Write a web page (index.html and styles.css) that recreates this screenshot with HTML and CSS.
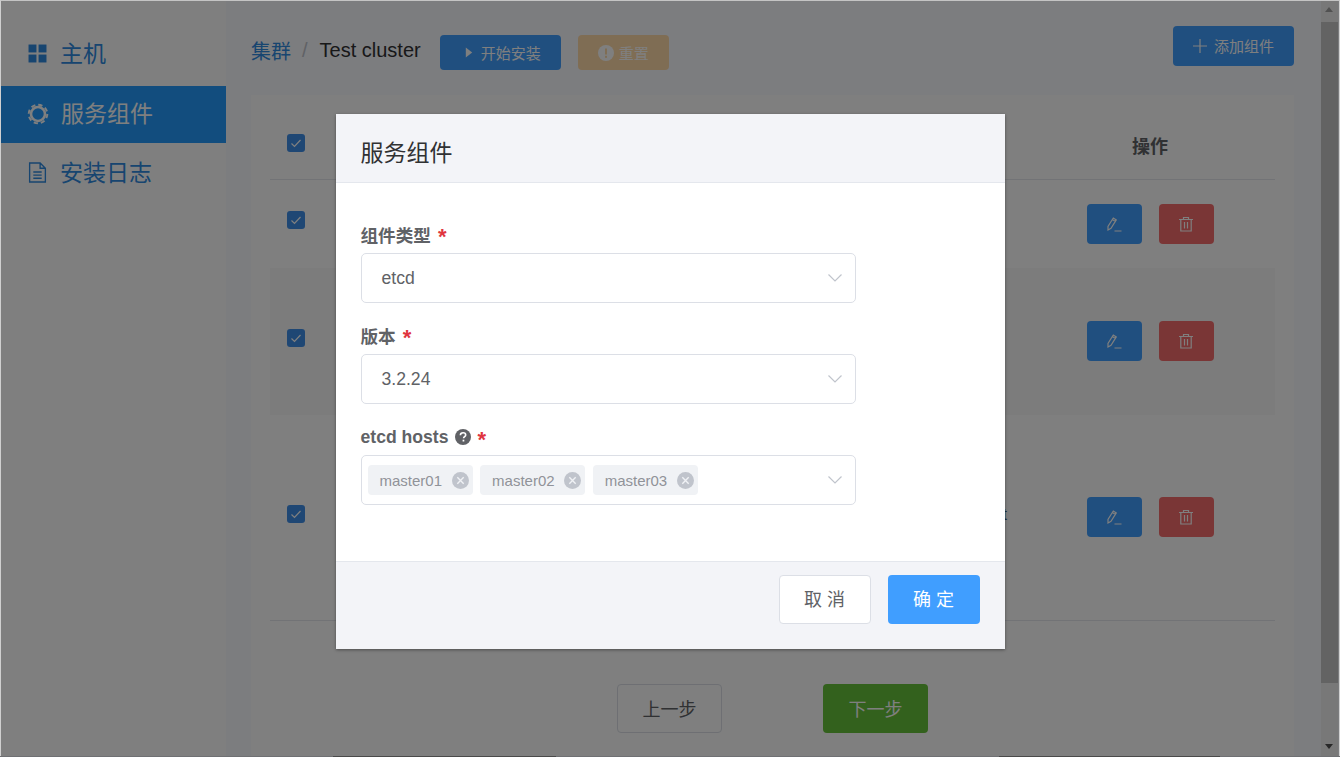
FILE: index.html
```html
<!DOCTYPE html>
<html lang="zh">
<head>
  <meta charset="UTF-8">
  <title>服务组件</title>
  <link rel="stylesheet" href="styles.css">
</head>
<body>
  <div class="window">
    <div class="app">
      <aside class="sidebar">
        <a class="menu-item">
          <svg class="menu-icon" viewBox="0 0 18 18"><rect x="0.5" y="0.5" width="7.5" height="7.5"/><rect x="10" y="0.5" width="7.5" height="7.5"/><rect x="0.5" y="10" width="7.5" height="7.5"/><rect x="10" y="10" width="7.5" height="7.5"/></svg>
          <span>主机</span>
        </a>
        <a class="menu-item active">
          <svg class="menu-icon gear" viewBox="0 0 22 22"><circle cx="11" cy="11" r="7" fill="none" stroke="currentColor" stroke-width="2.6"/><circle cx="11" cy="11" r="9.3" fill="none" stroke="currentColor" stroke-width="2" stroke-dasharray="4.3 3"/></svg>
          <span>服务组件</span>
        </a>
        <a class="menu-item">
          <svg class="menu-icon doc" viewBox="0 0 18 20"><path d="M1.5 1h10l5 5v13h-15z M11.5 1v5h5 M5 9.5h8 M5 12.5h8 M5 15.5h8" fill="none" stroke="currentColor" stroke-width="1.3"/></svg>
          <span>安装日志</span>
        </a>
      </aside>

      <main class="main">
        <div class="toolbar">
          <div class="crumbs">
            <a class="crumb-link">集群</a>
            <span class="crumb-sep">/</span>
            <span class="crumb-name">Test cluster</span>
            <button class="btn btn-small btn-blue start-btn">
              <svg class="play" viewBox="0 0 8 12"><path d="M0.5 0.5l7 5.5-7 5.5z" fill="currentColor"/></svg>
              开始安装
            </button>
            <button class="btn btn-small btn-warn">
              <svg class="warn-icon" viewBox="0 0 16 16"><circle cx="8" cy="8" r="8" fill="currentColor"/><rect x="7" y="3.5" width="2" height="6" fill="#ffdaa8"/><rect x="7" y="10.8" width="2" height="2" fill="#ffdaa8"/></svg>
              重置
            </button>
          </div>
          <button class="btn btn-add btn-blue">
            <svg class="plus" viewBox="0 0 14 14"><path d="M7 0v14M0 7h14" stroke="currentColor" stroke-width="1.2"/></svg>
            添加组件
          </button>
        </div>

        <section class="card">
          <div class="row row-head">
            <span class="check"><svg viewBox="0 0 18 18"><path d="M4.5 9.5l3 3 6-6.5" fill="none" stroke="currentColor" stroke-width="1.2"/></svg></span>
            <span></span>
            <span class="ops-title">操作</span>
          </div>
          <div class="row row-sm">
            <span class="check"><svg viewBox="0 0 18 18"><path d="M4.5 9.5l3 3 6-6.5" fill="none" stroke="currentColor" stroke-width="1.2"/></svg></span>
            <span></span>
            <div class="ops">
              <button class="btn btn-op btn-blue"><svg class="pencil" viewBox="0 0 16 16"><path d="M2 14l0-3.5 5.3-8.5 3 1.9-5.3 8.5z M6.4 3.6l3 1.9 M8.5 15h7" fill="none" stroke="currentColor" stroke-width="1.2"/></svg></button>
              <button class="btn btn-op btn-red"><svg viewBox="0 0 16 16"><path d="M1 3.5h14 M5.5 3.5v-2h5v2 M2.8 3.5v11.5h10.4v-11.5 M6.5 6v6.5 M9.5 6v6.5" fill="none" stroke="currentColor" stroke-width="1.2"/></svg></button>
            </div>
          </div>
          <div class="row row-md row-shade">
            <span class="check"><svg viewBox="0 0 18 18"><path d="M4.5 9.5l3 3 6-6.5" fill="none" stroke="currentColor" stroke-width="1.2"/></svg></span>
            <span></span>
            <div class="ops">
              <button class="btn btn-op btn-blue"><svg class="pencil" viewBox="0 0 16 16"><path d="M2 14l0-3.5 5.3-8.5 3 1.9-5.3 8.5z M6.4 3.6l3 1.9 M8.5 15h7" fill="none" stroke="currentColor" stroke-width="1.2"/></svg></button>
              <button class="btn btn-op btn-red"><svg viewBox="0 0 16 16"><path d="M1 3.5h14 M5.5 3.5v-2h5v2 M2.8 3.5v11.5h10.4v-11.5 M6.5 6v6.5 M9.5 6v6.5" fill="none" stroke="currentColor" stroke-width="1.2"/></svg></button>
            </div>
          </div>
          <div class="row row-lg">
            <span class="check"><svg viewBox="0 0 18 18"><path d="M4.5 9.5l3 3 6-6.5" fill="none" stroke="currentColor" stroke-width="1.2"/></svg></span>
            <span class="cell-text">kubelet</span>
            <div class="ops">
              <button class="btn btn-op btn-blue"><svg class="pencil" viewBox="0 0 16 16"><path d="M2 14l0-3.5 5.3-8.5 3 1.9-5.3 8.5z M6.4 3.6l3 1.9 M8.5 15h7" fill="none" stroke="currentColor" stroke-width="1.2"/></svg></button>
              <button class="btn btn-op btn-red"><svg viewBox="0 0 16 16"><path d="M1 3.5h14 M5.5 3.5v-2h5v2 M2.8 3.5v11.5h10.4v-11.5 M6.5 6v6.5 M9.5 6v6.5" fill="none" stroke="currentColor" stroke-width="1.2"/></svg></button>
            </div>
          </div>
          <div class="steps">
            <button class="btn btn-step btn-ghost">上一步</button>
            <button class="btn btn-step btn-green">下一步</button>
          </div>
        </section>
      </main>

      <div class="scrollbar">
        <div class="scroll-up"></div>
        <div class="scroll-thumb"></div>
        <div class="scroll-down"></div>
      </div>
    </div>

    <div class="overlay">
      <div class="modal">
        <header class="modal-head">服务组件</header>
        <div class="modal-body">
          <div class="field">
            <label class="field-label">组件类型 <em>*</em></label>
            <div class="select">
              <span>etcd</span>
              <svg class="chevron" viewBox="0 0 14 8"><path d="M0.5 0.5l6.5 6.5 6.5-6.5" fill="none" stroke="currentColor" stroke-width="1.2"/></svg>
            </div>
          </div>
          <div class="field">
            <label class="field-label">版本 <em>*</em></label>
            <div class="select">
              <span>3.2.24</span>
              <svg class="chevron" viewBox="0 0 14 8"><path d="M0.5 0.5l6.5 6.5 6.5-6.5" fill="none" stroke="currentColor" stroke-width="1.2"/></svg>
            </div>
          </div>
          <div class="field">
            <label class="field-label">etcd hosts
              <svg class="help" viewBox="0 0 16 16"><circle cx="8" cy="8" r="8" fill="currentColor"/><path d="M5.4 6.2c0-1.6 1.2-2.4 2.7-2.4s2.6.8 2.6 2.1c0 1.8-2.1 1.7-2.1 3.4" fill="none" stroke="#fff" stroke-width="1.6"/><rect x="7.6" y="10.7" width="1.7" height="1.8" fill="#fff"/></svg>
              <em>*</em>
            </label>
            <div class="select select-tags">
              <span class="tag">master01<svg class="tag-x" viewBox="0 0 16 16"><circle cx="8" cy="8" r="8" fill="currentColor"/><path d="M5 5l6 6M11 5l-6 6" stroke="#f0f2f5" stroke-width="1.3"/></svg></span>
              <span class="tag">master02<svg class="tag-x" viewBox="0 0 16 16"><circle cx="8" cy="8" r="8" fill="currentColor"/><path d="M5 5l6 6M11 5l-6 6" stroke="#f0f2f5" stroke-width="1.3"/></svg></span>
              <span class="tag">master03<svg class="tag-x" viewBox="0 0 16 16"><circle cx="8" cy="8" r="8" fill="currentColor"/><path d="M5 5l6 6M11 5l-6 6" stroke="#f0f2f5" stroke-width="1.3"/></svg></span>
              <svg class="chevron" viewBox="0 0 14 8"><path d="M0.5 0.5l6.5 6.5 6.5-6.5" fill="none" stroke="currentColor" stroke-width="1.2"/></svg>
            </div>
          </div>
        </div>
        <footer class="modal-foot">
          <button class="btn btn-cancel">取 消</button>
          <button class="btn btn-ok">确 定</button>
        </footer>
      </div>
    </div>
  </div>
  <div class="frame-bottom"></div>
</body>
</html>
```

FILE: styles.css
```css
* {
  box-sizing: border-box;
}

html, body {
  margin: 0;
  height: 757px;
  overflow: hidden;
  background: #fff;
  font-family: "Liberation Sans", "Noto Sans CJK SC", sans-serif;
}

.window {
  position: relative;
  height: 756px;
  width: 1340px;
  border-top: 1px solid #c4c4c4;
  border-left: 1px solid #d0d0d0;
  border-right: 1px solid #d0d0d0;
}

.app {
  display: flex;
  height: 100%;
  background: #f9fafe;
}

.sidebar {
  width: 225px;
  flex-shrink: 0;
  padding-top: 25px;
  background: #fff;
  display: flex;
  flex-direction: column;
  gap: 3px;
}

.menu-item {
  display: flex;
  align-items: center;
  height: 57px;
  padding-left: 27px;
  gap: 13px;
  font-size: 23px;
  color: #2f8ae0;
}

.menu-item span {
  padding-bottom: 6px;
}

.menu-item svg {
  margin-bottom: 2px;
}

.menu-item:last-child {
  margin-top: -1px;
}

.menu-item.active {
  background: #249bfc;
  color: #fff;
}

.menu-icon {
  width: 19px;
  height: 19px;
  fill: currentColor;
}

.menu-icon.gear {
  width: 22px;
  height: 22px;
  margin-left: -1px;
  margin-right: -1px;
}

.menu-icon.doc {
  width: 19px;
  height: 21px;
}

.main {
  flex: 1;
  padding: 25px 27px 0 25px;
  display: flex;
  flex-direction: column;
}

.toolbar {
  display: flex;
  justify-content: space-between;
  align-items: flex-start;
  height: 69px;
}

.crumbs {
  display: flex;
  align-items: center;
  margin-top: 9px;
  height: 35px;
}

.crumb-link {
  font-size: 20px;
  padding-bottom: 4px;
  color: #2f8ae0;
}

.crumb-sep {
  margin: 0 12px 0 11px;
  padding-bottom: 4px;
  font-size: 20px;
  color: #c0c4cc;
}

.crumb-name {
  font-size: 20px;
  padding-bottom: 4px;
  color: #303133;
}

.btn {
  border: 0;
  border-radius: 4px;
  padding: 0;
  font-family: inherit;
  display: flex;
  align-items: center;
  justify-content: center;
  color: #fff;
}

.btn-small {
  height: 35px;
  font-size: 15px;
  gap: 5px;
}

.btn-blue {
  background: #409eff;
}

.start-btn {
  width: 121px;
  margin-left: 19px;
  padding-left: 5px;
  gap: 8px;
}

.play {
  width: 8px;
  height: 11px;
}

.btn-warn {
  width: 91px;
  margin-left: 17px;
  background: #ffdaa8;
}

.warn-icon {
  width: 16px;
  height: 16px;
}

.btn-add {
  width: 121px;
  height: 40px;
  padding-bottom: 1px;
  font-size: 15px;
  gap: 7px;
}

.plus {
  width: 14px;
  height: 14px;
}

.card {
  flex: 1;
  padding: 0 19px;
  background: #fff;
}

.row {
  display: grid;
  grid-template-columns: 52px 1fr 250px;
  align-items: center;
  border-bottom: 1px solid #e4e7ed;
}

.row-head {
  height: 85px;
  padding-top: 16px;
}

.row-sm {
  height: 88px;
  border-bottom: 0;
}

.row-md {
  height: 147px;
  border-bottom: 0;
}

.row-lg {
  height: 206px;
}

.row-shade {
  background: #f8f8f8;
}

.check {
  display: block;
  width: 18px;
  height: 18px;
  margin-left: 17px;
  margin-bottom: 7px;
  border-radius: 3px;
  background: #3f8fe8;
  color: #fff;
}

.check svg {
  display: block;
}

.row-head .check {
  margin-bottom: 4px;
}

.row-sm .check {
  margin-bottom: 9px;
}

.ops-title {
  text-align: center;
  font-size: 18px;
  font-weight: bold;
  color: #606266;
}

.cell-text {
  text-align: right;
  padding-right: 18px;
  margin-bottom: 6px;
  font-size: 16px;
  color: #3a5a78;
}

.ops {
  display: flex;
  justify-content: center;
  gap: 17px;
}

.row-md .ops, .row-lg .ops {
  margin-bottom: 2px;
}

.btn-op {
  width: 55px;
  height: 40px;
}

.btn-op svg {
  width: 16px;
  height: 16px;
}

.btn-red {
  background: #f56c6c;
}

.steps {
  display: flex;
  justify-content: center;
  gap: 101px;
  margin-top: 63px;
}

.btn-step {
  width: 105px;
  height: 49px;
  padding-bottom: 2px;
  font-size: 18px;
}

.btn-ghost {
  background: #fff;
  border: 1px solid #dcdfe6;
  color: #606266;
}

.btn-green {
  background: #67c23a;
}

.scrollbar {
  width: 17px;
  flex-shrink: 0;
  margin-right: 1px;
  display: flex;
  flex-direction: column;
  background: #f1f1f1;
}

.scroll-up {
  height: 21px;
  position: relative;
}

.scroll-up::after {
  content: "";
  position: absolute;
  left: 4px;
  top: 6px;
  border: 4.5px solid transparent;
  border-top: 0;
  border-bottom: 5px solid #a3a3a3;
}

.scroll-thumb {
  height: 661px;
  background: #c6c6c6;
}

.scroll-down {
  flex: 1;
  position: relative;
}

.scroll-down::after {
  content: "";
  position: absolute;
  left: 4px;
  bottom: 7px;
  border: 4.5px solid transparent;
  border-bottom: 0;
  border-top: 5px solid #505050;
}

.overlay {
  position: absolute;
  inset: 0;
  display: flex;
  justify-content: center;
  align-items: flex-start;
  padding-top: 113px;
  background: rgba(0, 0, 0, 0.5);
}

.modal {
  width: 669px;
  height: 535px;
  display: flex;
  flex-direction: column;
  background: #fff;
  box-shadow: 0 1px 3px rgba(0, 0, 0, 0.4);
}

.modal-head {
  height: 69px;
  padding: 23px 25px 0;
  background: #f3f4f8;
  border-bottom: 1px solid #e4e7ed;
  font-size: 23px;
  line-height: 32px;
  color: #303133;
}

.modal-body {
  flex: 1;
  padding: 38px 25px 0;
}

.field {
  width: 495px;
  margin-bottom: 19px;
}

.field-label {
  display: flex;
  align-items: center;
  gap: 6px;
  height: 28px;
  margin-bottom: 4px;
  padding-bottom: 2px;
  font-size: 17.6px;
  font-weight: bold;
  color: #606266;
}

.field:last-child .field-label {
  padding-bottom: 0;
}

.field-label em {
  font-style: normal;
  font-size: 22px;
  line-height: 22px;
  padding-top: 6px;
  margin-left: 1px;
  color: #e0353f;
}

.help {
  width: 16px;
  height: 16px;
  color: #606266;
}

.select {
  display: flex;
  align-items: center;
  justify-content: space-between;
  height: 50px;
  padding: 0 13px 0 20px;
  border: 1px solid #dcdfe6;
  border-radius: 5px;
  font-size: 17.6px;
  color: #606266;
}

.select-tags {
  justify-content: flex-start;
  gap: 7.6px;
  padding-left: 6px;
}

.tag {
  display: flex;
  align-items: center;
  justify-content: space-between;
  width: 105px;
  height: 30px;
  padding: 0 4px 0 12px;
  border-radius: 4px;
  background: #f0f2f5;
  font-size: 15px;
  color: #909399;
}

.tag-x {
  width: 17px;
  height: 17px;
  color: #c0c4cc;
}

.chevron {
  width: 14px;
  height: 8px;
  color: #c0c4cc;
}

.select-tags .chevron {
  margin-left: auto;
}

.modal-foot {
  display: flex;
  justify-content: flex-end;
  gap: 17px;
  height: 88px;
  padding: 13px 25px 0;
  background: #f3f4f8;
  border-top: 1px solid #e4e7ed;
}

.btn-cancel, .btn-ok {
  width: 92px;
  height: 49px;
  padding-bottom: 3px;
  font-size: 18px;
  white-space: pre;
}

.btn-cancel {
  background: #fff;
  border: 1px solid #dcdfe6;
  color: #606266;
}

.btn-ok {
  background: #409eff;
}

.frame-bottom {
  height: 1px;
  background: linear-gradient(to right, #6f7073 333px, #4a4a4a 333px, #4a4a4a 556px, #6f7073 556px, #6f7073 999px, #4a4a4a 999px, #4a4a4a 1220px, #6f7073 1220px);
}
```
